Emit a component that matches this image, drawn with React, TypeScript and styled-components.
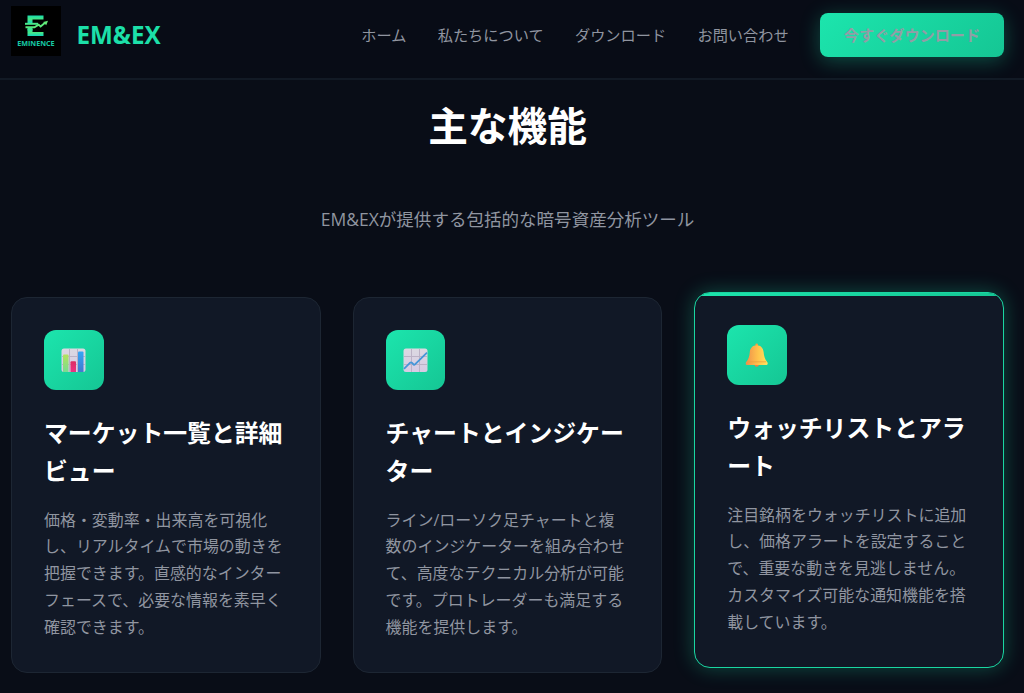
import React from "react";
import styled, { createGlobalStyle, css } from "styled-components";

const GlobalStyle = createGlobalStyle`
  * { box-sizing: border-box; }
  html, body { margin: 0; padding: 0; background: #090d17; overflow: hidden; }
  body { font-family: "Open Sans", "Noto Sans CJK JP", sans-serif; color: #fff; }
`;

const accent = "linear-gradient(135deg, #1ce5ad 0%, #15c694 100%)";

const Page = styled.div`
  height: 693px;
  overflow: hidden;
  background: #090d17;
`;

const Header = styled.header`
  display: flex;
  align-items: flex-start;
  justify-content: space-between;
  height: 80px;
  padding: 6px 20px 0 11px;
  background: #080c16;
  border-bottom: 2px solid #121a25;
`;

const Brand = styled.a`
  display: flex;
  align-items: center;
  gap: 15.5px;
  height: 50px;
`;

const BrandName = styled.span`
  font-size: 24.2px;
  font-weight: 700;
  line-height: 50px;
  color: #1ce0a9;
  padding-top: 8px;
`;

const Nav = styled.nav`
  display: flex;
  align-items: center;
  gap: 31.4px;
  margin-top: 7px;
`;

const NavLink = styled.a`
  font-size: 15.2px;
  line-height: 24px;
  color: #9095a0;
`;

const DownloadButton = styled.a`
  display: flex;
  align-items: center;
  justify-content: center;
  width: 184px;
  height: 43.5px;
  padding-bottom: 2px;
  border-radius: 8px;
  font-size: 15.15px;
  font-weight: 700;
  color: #929da6;
  background: ${accent};
  box-shadow: 0 4px 20px rgba(28, 229, 173, 0.3);
`;

const Features = styled.main`
  padding: 0 20px 0 11px;
`;

const Heading = styled.h1`
  margin: 0;
  padding-top: 14px;
  font-size: 39.7px;
  line-height: 64px;
  font-weight: 700;
  text-align: center;
`;

const Lead = styled.p`
  margin: 47px 0 0;
  font-size: 17.55px;
  line-height: 28px;
  text-align: center;
  color: #9095a0;
`;

const Cards = styled.div`
  display: grid;
  grid-template-columns: repeat(3, 1fr);
  gap: 31.8px;
  margin-top: 64px;
`;

const Card = styled.article<{ $active?: boolean }>`
  height: 376px;
  padding: 32px;
  border: 1px solid #1d2633;
  border-radius: 16px;
  background: #111826;
  ${(p) =>
    p.$active &&
    css`
      position: relative;
      overflow: hidden;
      transform: translateY(-5px);
      border-color: #1ad6a1;
      box-shadow: 0 0 20px rgba(28, 229, 173, 0.3);
      &::before {
        content: "";
        position: absolute;
        top: 0;
        left: 0;
        right: 0;
        height: 3px;
        background: ${accent};
      }
    `}
`;

const IconTile = styled.div`
  display: flex;
  align-items: center;
  justify-content: center;
  width: 59.5px;
  height: 59.5px;
  padding-top: 2px;
  border-radius: 12px;
  background: ${accent};
`;

const CardTitle = styled.h2`
  margin: 24px 0 0;
  font-size: 23.85px;
  line-height: 38px;
  font-weight: 700;
  white-space: pre;
`;

const CardText = styled.p`
  margin: 17px 0 0;
  font-size: 15.94px;
  line-height: 26.9px;
  color: #9095a0;
  white-space: pre;
`;

const Logo = () => (
  <svg width="50" height="50" viewBox="0 0 50 50">
    <defs>
      <linearGradient id="lg" x1="0" y1="0" x2="0" y2="1">
        <stop offset="0" stopColor="#18dcb0" />
        <stop offset="0.5" stopColor="#48e884" />
        <stop offset="1" stopColor="#12d6bb" />
      </linearGradient>
    </defs>
    <rect width="50" height="50" fill="#000" />
    <path d="M16.5 9.5H32.5V13.5H21.5V17H16.5Z" fill="url(#lg)" />
    <path d="M16.5 23H21.5V26H32.5V30H16.5Z" fill="url(#lg)" />
    <rect x="14" y="16.8" width="13" height="2" fill="#48e88a" />
    <path
      d="M14.5 21.2H23.5L27.6 18.6L29.6 20.4L34 16.8"
      fill="none"
      stroke="#5cea7c"
      strokeWidth="1.9"
    />
    <rect x="16.5" y="21.5" width="5" height="3" fill="#3de48f" />
    <path d="M32.2 15.9L37 14.8L35.2 19.2Z" fill="#64eb78" />
    <text
      x="24.9"
      y="40.4"
      textAnchor="middle"
      textLength="37.5"
      lengthAdjust="spacingAndGlyphs"
      fontFamily="Open Sans"
      fontSize="7.4"
      fontWeight="700"
      fill="#17c9a5"
    >
      EMINENCE
    </text>
  </svg>
);

const Grid = () => (
  <>
    <rect x="0.5" y="0.5" width="24" height="23.5" rx="2.5" fill="url(#paper)" />
    <path d="M8.5 1V24M16.5 1V24M1 8.5H24M1 16.5H24" stroke="#bcb2c6" strokeWidth="1" />
  </>
);

const PaperGradient = () => (
  <linearGradient id="paper" x1="0" y1="0" x2="0" y2="1">
    <stop offset="0" stopColor="#dcd9e2" />
    <stop offset="1" stopColor="#d7cae4" />
  </linearGradient>
);

const BarsIcon = () => (
  <svg width="25" height="25" viewBox="0 0 25 25">
    <defs>
      <PaperGradient />
      <linearGradient id="g" x1="0" y1="0" x2="0" y2="1">
        <stop offset="0" stopColor="#b4e35c" />
        <stop offset="1" stopColor="#78dc91" />
      </linearGradient>
      <linearGradient id="r" x1="0" y1="0" x2="0" y2="1">
        <stop offset="0" stopColor="#dc2e63" />
        <stop offset="1" stopColor="#ed3184" />
      </linearGradient>
      <linearGradient id="b" x1="0" y1="0" x2="0" y2="1">
        <stop offset="0" stopColor="#35a6f5" />
        <stop offset="1" stopColor="#4278cf" />
      </linearGradient>
    </defs>
    <Grid />
    <path d="M2 24V7.5Q2 6.5 3 6.5H6.5Q7.5 6.5 7.5 7.5V24Z" fill="url(#g)" />
    <path d="M9.5 24V14.3Q9.5 13.3 10.5 13.3H14Q15 13.3 15 14.3V24Z" fill="url(#r)" />
    <path d="M17 24V4.5Q17 3.5 18 3.5H21.5Q22.5 3.5 22.5 4.5V24Z" fill="url(#b)" />
  </svg>
);

const TrendIcon = () => (
  <svg width="25" height="25" viewBox="0 0 25 25">
    <defs>
      <PaperGradient />
    </defs>
    <Grid />
    <path
      d="M1 20.8L7.2 14.7Q8 14 8.8 14.7L10.6 16.5Q11.3 17.1 12 16.4L24 4.7"
      fill="none"
      stroke="#4696d8"
      strokeWidth="1.8"
    />
  </svg>
);

const BellIcon = () => (
  <svg width="25" height="25" viewBox="0 0 25 25">
    <defs>
      <linearGradient id="bell" x1="0" y1="0" x2="1" y2="0">
        <stop offset="0" stopColor="#ee8f4b" />
        <stop offset="0.55" stopColor="#ffc24c" />
        <stop offset="1" stopColor="#ffe45f" />
      </linearGradient>
    </defs>
    <circle cx="12.7" cy="21.6" r="2.2" fill="#ef7e45" />
    <circle cx="12.7" cy="2" r="1.4" fill="#f3a043" />
    <path
      d="M12.7 2.2C8.6 2.2 6.2 5 5.8 9C5.4 13.2 4.7 16 2 19.3Q1.2 22 2.7 22H22.6Q24.3 22 23.4 19.3C20.8 16 20 13.2 19.6 9C19.2 5 16.8 2.2 12.7 2.2Z"
      fill="url(#bell)"
    />
    <path d="M3.4 18.8H22.2" stroke="#e9a23d" strokeWidth="0.8" />
  </svg>
);

const features = [
  {
    icon: <BarsIcon />,
    title: "マーケット一覧と詳細\nビュー",
    text: "価格・変動率・出来高を可視化\nし、リアルタイムで市場の動きを\n把握できます。直感的なインター\nフェースで、必要な情報を素早く\n確認できます。",
  },
  {
    icon: <TrendIcon />,
    title: "チャートとインジケー\nター",
    text: "ライン/ローソク足チャートと複\n数のインジケーターを組み合わせ\nて、高度なテクニカル分析が可能\nです。プロトレーダーも満足する\n機能を提供します。",
  },
  {
    icon: <BellIcon />,
    title: "ウォッチリストとアラ\nート",
    text: "注目銘柄をウォッチリストに追加\nし、価格アラートを設定すること\nで、重要な動きを見逃しません。\nカスタマイズ可能な通知機能を搭\n載しています。",
    active: true,
  },
];

export default function App() {
  return (
    <Page lang="ja">
      <GlobalStyle />
      <Header>
        <Brand>
          <Logo />
          <BrandName>EM&amp;EX</BrandName>
        </Brand>
        <Nav>
          <NavLink>ホーム</NavLink>
          <NavLink>私たちについて</NavLink>
          <NavLink>ダウンロード</NavLink>
          <NavLink>お問い合わせ</NavLink>
          <DownloadButton>今すぐダウンロード</DownloadButton>
        </Nav>
      </Header>
      <Features>
        <Heading>主な機能</Heading>
        <Lead>EM&amp;EXが提供する包括的な暗号資産分析ツール</Lead>
        <Cards>
          {features.map((f) => (
            <Card key={f.title} $active={f.active}>
              <IconTile>{f.icon}</IconTile>
              <CardTitle>{f.title}</CardTitle>
              <CardText>{f.text}</CardText>
            </Card>
          ))}
        </Cards>
      </Features>
    </Page>
  );
}
